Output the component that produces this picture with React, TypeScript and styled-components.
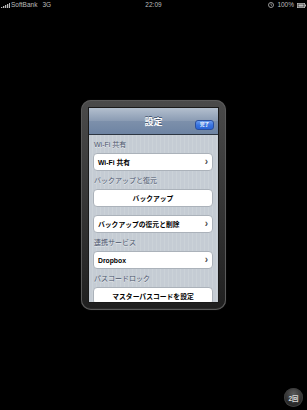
import { styled, createGlobalStyle } from 'styled-components';

const GlobalStyle = createGlobalStyle`
  html, body {
    margin: 0;
    padding: 0;
    background: #000;
  }
  body {
    font-family: 'Liberation Sans', 'Noto Sans CJK JP', sans-serif;
  }
`;

const Page = styled.div`
  position: relative;
  width: 307px;
  height: 410px;
  background: #000;
  overflow: hidden;
`;

const StatusBar = styled.header`
  height: 10px;
  display: grid;
  grid-template-columns: 1fr auto 1fr;
  align-items: center;
  padding: 0 1px;
  color: #bdbdbd;
  font-size: 6.5px;
  line-height: 10px;
`;

const StatusLeft = styled.div`
  display: flex;
  align-items: center;
  gap: 1px;
`;

const StatusRight = styled.div`
  display: flex;
  align-items: center;
  justify-content: flex-end;
  gap: 3px;
`;

const Carrier = styled.span`
  margin-right: 4px;
`;

const Stage = styled.main`
  display: flex;
  justify-content: center;
  padding-top: 90px;
`;

const Frame = styled.section`
  width: 145px;
  height: 210px;
  box-sizing: border-box;
  padding: 8px;
  border-radius: 10px;
  background: linear-gradient(#4a4a4a, #333 55%, #1f1f1f);
  box-shadow: inset 0 0 0 1px #5a5a5a, inset 0 -2px 0 #2a2a2a, 0 0 2px #111;
`;

const Screen = styled.div`
  height: 194px;
  overflow: hidden;
  box-shadow: 0 0 0 1px #1a1a1a;
  background-color: #c5ccd4;
  background-image: repeating-linear-gradient(
    90deg,
    #c5ccd4 0px,
    #c5ccd4 3px,
    #cbd2d8 3px,
    #cbd2d8 4px
  );
`;

const NavBar = styled.div`
  position: relative;
  height: 27px;
  display: flex;
  align-items: center;
  justify-content: center;
  background: linear-gradient(#b3bfce, #8a9bb3 50%, #7d90ab 50%, #6e84a3);
  border-bottom: 1px solid #2d3642;
  box-sizing: border-box;
`;

const NavTitle = styled.h1`
  margin: 0;
  font-size: 9px;
  font-weight: 700;
  color: #fff;
  text-shadow: 0 -1px 0 #4b5b75;
`;

const DoneButton = styled.button`
  position: absolute;
  right: 4px;
  top: 12px;
  width: 19px;
  height: 10px;
  padding: 0;
  border: 1px solid #2a4f9e;
  border-radius: 3px;
  background: linear-gradient(#6a9cf0, #3a74e0 50%, #2a64d6);
  color: #fff;
  font-family: inherit;
  font-size: 4.5px;
  font-weight: 700;
  line-height: 8px;
`;

const SectionHeader = styled.div`
  height: 18px;
  box-sizing: border-box;
  padding: 5px 0 0 5px;
  font-size: 7px;
  line-height: 10px;
  color: #4c566c;
  text-shadow: 0 1px 0 #e4e8ec;
`;

const Cell = styled.div<{ $center?: boolean }>`
  height: 18px;
  margin: 0 5px 0 4px;
  box-sizing: border-box;
  padding: 0 4px 0 4px;
  display: flex;
  align-items: center;
  justify-content: ${(p) => (p.$center ? 'center' : 'space-between')};
  background: #fff;
  border: 1px solid #abb2ba;
  border-radius: 4px;
  font-size: 6.8px;
  font-weight: 700;
  color: #000;
`;

const Gap = styled.div`
  height: 8px;
`;

const Chevron = styled.span`
  font-size: 10px;
  line-height: 10px;
  color: #4a4a4a;
  font-weight: 700;
`;

const Badge = styled.div`
  position: absolute;
  left: 284px;
  top: 388px;
  width: 19px;
  height: 19px;
  border-radius: 50%;
  display: flex;
  align-items: center;
  justify-content: center;
  background: radial-gradient(circle at 50% 30%, #5a5a5a, #2c2c2c 60%, #1a1a1a);
  box-shadow: inset 0 0 0 1px #3c3c3c;
  color: #d8d8d8;
  font-size: 6.5px;
  font-weight: 700;
`;

const SignalBars = () => (
  <svg width="9" height="5" viewBox="0 0 9 5">
    <rect x="0" y="4" width="1.3" height="1" fill="#bbb" />
    <rect x="2" y="3" width="1.3" height="2" fill="#bbb" />
    <rect x="4" y="2" width="1.3" height="3" fill="#bbb" />
    <rect x="6" y="1" width="1.3" height="4" fill="#bbb" />
    <rect x="8" y="0" width="1" height="5" fill="#bbb" />
  </svg>
);

const LockIcon = () => (
  <svg width="6" height="6" viewBox="0 0 6 6">
    <circle cx="3" cy="3" r="2.5" fill="none" stroke="#bbb" strokeWidth="0.8" />
    <path d="M3 1.5 V3 L4 3.6" stroke="#bbb" strokeWidth="0.7" fill="none" />
  </svg>
);

const Battery = () => (
  <svg width="9" height="5" viewBox="0 0 9 5">
    <rect x="0.4" y="0.4" width="7.2" height="4.2" fill="none" stroke="#bbb" strokeWidth="0.8" />
    <rect x="1.3" y="1.3" width="5.4" height="2.4" fill="#bbb" />
    <rect x="8" y="1.5" width="1" height="2" fill="#bbb" />
  </svg>
);

const App = () => {
  return (
    <Page>
      <GlobalStyle />
      <StatusBar>
        <StatusLeft>
          <SignalBars />
          <Carrier>SoftBank</Carrier>
          <span>3G</span>
        </StatusLeft>
        <span>22:09</span>
        <StatusRight>
          <LockIcon />
          <span>100%</span>
          <Battery />
        </StatusRight>
      </StatusBar>

      <Stage>
        <Frame>
          <Screen>
            <NavBar>
              <NavTitle>設定</NavTitle>
              <DoneButton>完了</DoneButton>
            </NavBar>

            <SectionHeader>Wi-Fi 共有</SectionHeader>
            <Cell>
              <span>Wi-Fi 共有</span>
              <Chevron>›</Chevron>
            </Cell>

            <SectionHeader>バックアップと復元</SectionHeader>
            <Cell $center>バックアップ</Cell>
            <Gap />
            <Cell>
              <span>バックアップの復元と削除</span>
              <Chevron>›</Chevron>
            </Cell>

            <SectionHeader>連携サービス</SectionHeader>
            <Cell>
              <span>Dropbox</span>
              <Chevron>›</Chevron>
            </Cell>

            <SectionHeader>パスコードロック</SectionHeader>
            <Cell $center>マスターパスコードを設定</Cell>
          </Screen>
        </Frame>
      </Stage>

      <Badge>2回</Badge>
    </Page>
  );
};

export default App;
